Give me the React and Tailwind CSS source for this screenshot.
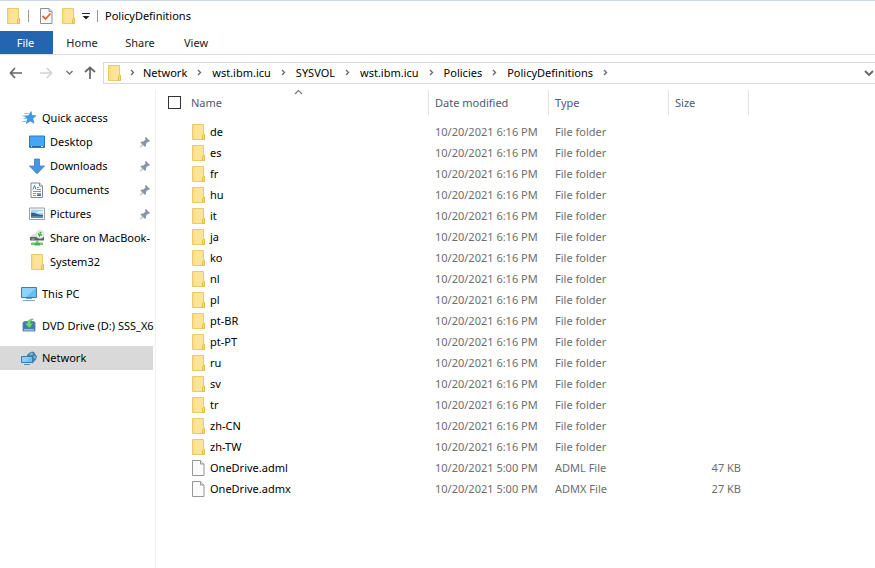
import React, { useState } from "react";

const folders = [
  "de", "es", "fr", "hu", "it", "ja", "ko", "nl", "pl",
  "pt-BR", "pt-PT", "ru", "sv", "tr", "zh-CN", "zh-TW",
];

const rows = [
  ...folders.map((name) => ({
    name,
    date: "10/20/2021 6:16 PM",
    type: "File folder",
    size: "",
  })),
  { name: "OneDrive.adml", date: "10/20/2021 5:00 PM", type: "ADML File", size: "47 KB" },
  { name: "OneDrive.admx", date: "10/20/2021 5:00 PM", type: "ADMX File", size: "27 KB" },
];

const crumbs = ["Network", "wst.ibm.icu", "SYSVOL", "wst.ibm.icu", "Policies", "PolicyDefinitions"];

function FolderIcon() {
  return (
    <svg width="13" height="16" viewBox="0 0 13 16" className="shrink-0" aria-hidden="true">
      <path d="M.5.5h11v9.500h1v5.500H.5z" fill="#fbe398" stroke="#ebca6c" />
      <path d="M1 1h2v14H1z" fill="#fbdd85" />
      <path d="M10.500 15.500v-4l1-1h1v5z" fill="#f8dc82" stroke="#e3bb52" />
    </svg>
  );
}

function FileIcon() {
  return (
    <svg width="13" height="16" viewBox="0 0 13 16" className="shrink-0" aria-hidden="true">
      <path d="M.5.5h8L12 4v11.500H.5z" fill="#fbfbfb" stroke="#969696" />
      <path d="M8.500.5V4H12" fill="#e8e8e8" stroke="#969696" />
    </svg>
  );
}

function PropertiesIcon() {
  return (
    <svg width="13" height="16" viewBox="0 0 13 16" aria-hidden="true">
      <path d="M.5.5h8.500l3 3v12H.5z" fill="#f7f8fa" stroke="#8c8f94" />
      <path d="M9 .5v3h3" fill="#dfe3e8" stroke="#8c8f94" />
      <path d="M2.500 8l3 3 5-5.500" fill="none" stroke="#e2652f" strokeWidth="1.800" />
    </svg>
  );
}

function StarIcon() {
  return (
    <svg width="16" height="16" viewBox="0 0 16 16" aria-hidden="true">
      <path d="M10 1.500l1 4 4 .2-3.200 2.700 1.200 4.800-3.700-2.300-4 2.600 1.200-4.600-3-2.800 4.100-.4z" fill="#3f97e4" stroke="#3586d2" strokeWidth=".6" />
      <path d="M3.500 3.500h4M1.500 6h3M2.500 8.500h3M1.500 11.500h4" stroke="#7fbdf0" />
    </svg>
  );
}

function DesktopIcon() {
  return (
    <svg width="16" height="14" viewBox="0 0 16 14" aria-hidden="true">
      <path d="M.5 1h15v11.500H.5z" fill="#47a6f4" stroke="#267ac4" />
      <path d="M1 11.500h14" stroke="#1e66ab" />
      <path d="M2 11.500h1M12 11.500h2" stroke="#c4e3ff" />
    </svg>
  );
}

function DownloadIcon() {
  return (
    <svg width="16" height="17" viewBox="0 0 16 17" aria-hidden="true">
      <path d="M5.500 1h5v7h5L8 15.800.5 8h5z" fill="#4694e2" stroke="#3880cc" strokeWidth=".8" />
    </svg>
  );
}

function DocumentIcon() {
  return (
    <svg width="14" height="17" viewBox="0 0 14 17" aria-hidden="true">
      <path d="M1 1h8.500l3 3v11.500H1z" fill="#fff" stroke="#82878c" />
      <path d="M9.500 1v3h3" fill="#e3e6e9" stroke="#82878c" />
      <path d="M7 5.500h2M7 7.500h4M3 9.500h8M3 11.500h3M3 13.500h3" stroke="#5b9fda" />
      <path d="M3 7.500l1.500-4L6 7.500" fill="none" stroke="#2d80c8" />
      <path d="M7 11h4v3H7z" fill="#5ea3d6" />
      <path d="M7 13h4v1H7z" fill="#3c6f60" />
    </svg>
  );
}

function PictureIcon() {
  return (
    <svg width="16" height="14" viewBox="0 0 16 14" aria-hidden="true">
      <path d="M.5 1h15v11.500H.5z" fill="#fff" stroke="#989da1" />
      <path d="M2 2.500h12V11H2z" fill="#a9d5f5" />
      <path d="M2 6c3-1 5 1.500 12 2v3H2z" fill="#376180" />
      <path d="M2 9.500c4-1 8 0 12-.5v2H2z" fill="#548cba" />
      <path d="M8 5c2-1.500 3-.5 6-1v2H8z" fill="#e8f4fc" />
    </svg>
  );
}

function ShareDriveIcon() {
  return (
    <svg width="16" height="17" viewBox="0 0 16 17" aria-hidden="true">
      <path d="M1 7l2.500-2.500h9L15 7v1H1z" fill="#d5d8da" />
      <path d="M1 7h14v3.500H1z" fill="#5c6063" />
      <path d="M2.500 9h3" stroke="#8fe080" />
      <circle cx="11" cy="4.500" r="4" fill="#f0f5ef" stroke="#c0c7c0" strokeWidth=".6" />
      <path d="M9 3l1.500 3 .8-2 1.700 1.500M10.500 2.300l2 .2" fill="none" stroke="#36a541" strokeWidth="1.200" />
      <path d="M7 10.500h2.500v2H14v2.500H2v-2.500h5z" fill="#74c777" />
      <path d="M5.500 13h5.500v2.500H5.500z" fill="#4bae57" />
    </svg>
  );
}

function ComputerIcon() {
  return (
    <svg width="16" height="16" viewBox="0 0 16 16" aria-hidden="true">
      <path d="M.5 1.500h15v10H.5z" fill="#65bdf4" stroke="#4b7999" />
      <path d="M1 2h14L5 11H1z" fill="#8ed2fb" />
      <path d="M5 12.500h6" stroke="#8b9aa6" />
      <path d="M2 14.500h12" stroke="#7ba9c8" />
    </svg>
  );
}

function DvdIcon() {
  return (
    <svg width="16" height="16" viewBox="0 0 16 16" aria-hidden="true">
      <path d="M2 4.500L3.500 3.500h9.500l1 1V13H2z" fill="#4678b0" stroke="#557da8" strokeWidth=".8" />
      <path d="M3 11h10v1.500H3z" fill="#9dbfe3" />
      <path d="M12.500 1C8 1 6.500 3 6.300 5.500H4L8.300 10 12 5.500H9.500c0-2 1-3.500 3-4.500z" fill="#6ddc70" stroke="#3caa4e" strokeWidth=".5" />
    </svg>
  );
}

function NetworkIcon() {
  return (
    <svg width="17" height="16" viewBox="0 0 17 16" aria-hidden="true">
      <path d="M6 5l2-2 3-1.500 2 .5 3 4.500-1 3-3.500 4L6 9z" fill="#4581ab" />
      <path d="M8 4l3-1.500 1.500 2-3 1zM13 5.500l2 1-1 2.500-1.500-1z" fill="#7fb2d4" />
      <path d="M.5 6.500h11v6H.5z" fill="#6cc0f3" stroke="#3c7baa" />
      <path d="M1 7h8l-4 5H1z" fill="#86cff9" />
      <path d="M3 14.500h6" stroke="#5a8caf" />
    </svg>
  );
}

function PinIcon() {
  return (
    <svg width="10" height="11" viewBox="0 0 10 11" className="shrink-0" role="img" aria-label="Pinned">
      <path d="M6 0l4 4-1 1-1-.2-2 2V9L5 10 3 8 .5 10.500 0 10l2.500-2.500L.5 5.500l1-1h2l2-2L5 1z" fill="#8797a5" />
    </svg>
  );
}

function Chevron({ direction = "right" }) {
  return (
    <svg width="9" height="9" viewBox="0 0 9 9" className="shrink-0" aria-hidden="true">
      {direction === "right" && <path d="M3 2l2.500 2.500L3 7" fill="none" stroke="#666" strokeWidth="1.300" />}
      {direction === "down" && <path d="M1.500 3l3 3 3-3" fill="none" stroke="#777" strokeWidth="1.500" />}
      {direction === "up" && <path d="M1 6l3.500-3.500L8 6" fill="none" stroke="#777" strokeWidth="1.100" />}
    </svg>
  );
}

function Arrow({ className }) {
  return (
    <svg width="14" height="12" viewBox="0 0 14 12" className={className} aria-hidden="true">
      <path d="M6 1L1.500 6 6 11M2 6h11" fill="none" stroke="currentColor" strokeWidth="1.700" />
    </svg>
  );
}

const quickAccess = [
  { label: "Desktop", icon: <DesktopIcon />, pinned: true },
  { label: "Downloads", icon: <DownloadIcon />, pinned: true },
  { label: "Documents", icon: <DocumentIcon />, pinned: true },
  { label: "Pictures", icon: <PictureIcon />, pinned: true },
  { label: "Share on MacBook-", icon: <ShareDriveIcon /> },
  { label: "System32", icon: <FolderIcon /> },
];

function NavItem({ item, nested, active }) {
  return (
    <a
      href="#"
      className={`flex h-6 items-center whitespace-nowrap ${nested ? "pl-7" : "pl-5"} ${
        active ? "bg-[#d9d9d9]" : ""
      }`}
    >
      <span className="flex w-[18px] shrink-0 justify-center">{item.icon}</span>
      <span className="ml-1 flex-1">{item.label}</span>
      {item.pinned && (
        <span className="mr-[3px]">
          <PinIcon />
        </span>
      )}
    </a>
  );
}

export default function App() {
  const [allSelected, setAllSelected] = useState(false);

  return (
    <div className="flex min-h-screen flex-col bg-white font-['Noto_Sans','Open_Sans',sans-serif] text-[11px] leading-4 text-black">
      {/* Title bar */}
      <header className="flex h-[31px] items-center border-t border-[#cbd5e4] pl-[7px]">
        <FolderIcon />
        <span className="mx-2 h-3 w-px bg-[#999]" />
        <button type="button" aria-label="Properties" className="ml-[3px]">
          <PropertiesIcon />
        </button>
        <button type="button" aria-label="New folder" className="ml-[9px]">
          <FolderIcon />
        </button>
        <button type="button" aria-label="Customize toolbar" className="ml-[7px]">
          <svg width="8" height="8" viewBox="0 0 8 8" aria-hidden="true">
            <path d="M0 1.500h8" stroke="#222" />
            <path d="M.5 4h7L4 7.500z" fill="#222" />
          </svg>
        </button>
        <span className="mx-[7px] h-3 w-px bg-[#999]" />
        <h1>PolicyDefinitions</h1>
      </header>

      {/* Ribbon tabs */}
      <nav className="flex h-6 border-b border-[#dcdcdc] text-[#222]">
        <button type="button" className="w-[53px] bg-[#2464b0] pr-0.5 text-white">File</button>
        <button type="button" className="w-[58px]">Home</button>
        <button type="button" className="w-[58px]">Share</button>
        <button type="button" className="w-[54px]">View</button>
      </nav>

      {/* Address bar */}
      <div className="flex h-[35px] items-center">
        <div className="flex w-[103px] shrink-0 items-center pl-[9px] text-[#666]">
          <button type="button" aria-label="Back"><Arrow /></button>
          <button type="button" aria-label="Forward" className="ml-4">
            <Arrow className="rotate-180 text-[#d4d4d4]" />
          </button>
          <button type="button" aria-label="Recent locations" className="ml-3">
            <Chevron direction="down" />
          </button>
          <button type="button" aria-label="Up" className="ml-[9px]">
            <Arrow className="rotate-90" />
          </button>
        </div>
        <div className="flex h-[22px] min-w-0 flex-1 items-center border-y border-l border-[#d9d9d9] pl-1">
          <FolderIcon />
          <span className="flex w-[22px] justify-center"><Chevron /></span>
          {crumbs.map((crumb, i) => (
            <React.Fragment key={i}>
              <a href="#">{crumb}</a>
              <span className="flex w-[25px] justify-center"><Chevron /></span>
            </React.Fragment>
          ))}
          <button type="button" aria-label="Previous locations" className="ml-auto pr-px">
            <svg width="10" height="8" viewBox="0 0 10 8" aria-hidden="true">
              <path d="M1 2l4 4 4-4" fill="none" stroke="#666" strokeWidth="1.900" />
            </svg>
          </button>
        </div>
      </div>

      <div className="flex flex-1">
        {/* Navigation pane */}
        <aside className="w-[156px] shrink-0 border-r border-[#f0f0f0] pt-4 pr-0.5">
          <NavItem item={{ label: "Quick access", icon: <StarIcon /> }} />
          {quickAccess.map((item) => (
            <NavItem key={item.label} item={item} nested />
          ))}
          <div className="mt-2 flex flex-col gap-2">
            <NavItem item={{ label: "This PC", icon: <ComputerIcon /> }} />
            <NavItem item={{ label: "DVD Drive (D:) SSS_X6", icon: <DvdIcon /> }} />
            <NavItem item={{ label: "Network", icon: <NetworkIcon /> }} active />
          </div>
        </aside>

        {/* File list */}
        <main className="min-w-0 flex-1">
          <table className="w-[593px] table-fixed border-collapse text-left">
            <colgroup>
              <col className="w-[273px]" />
              <col className="w-[120px]" />
              <col className="w-[120px]" />
              <col className="w-[80px]" />
            </colgroup>
            <thead className="text-[#4c5a78]">
              <tr>
                <th className="p-0 pb-1.5 font-normal">
                  <div className="relative flex h-[25px] items-center border-r border-[#e2e2e2] pl-3">
                    <input
                      type="checkbox"
                      aria-label="Select all"
                      checked={allSelected}
                      onChange={(e) => setAllSelected(e.target.checked)}
                      className="size-[13px] appearance-none border border-[#333] bg-white checked:bg-[#2464b0]"
                    />
                    <span className="ml-[10px]">Name</span>
                    <span className="absolute -top-0.5 left-1/2 ml-0.5"><Chevron direction="up" /></span>
                  </div>
                </th>
                <th className="p-0 pb-1.5 font-normal">
                  <div className="flex h-[25px] items-center border-r border-[#e2e2e2] pl-1.5">Date modified</div>
                </th>
                <th className="p-0 pb-1.5 font-normal">
                  <div className="flex h-[25px] items-center border-r border-[#e2e2e2] pl-1.5">Type</div>
                </th>
                <th className="p-0 pb-1.5 font-normal">
                  <div className="flex h-[25px] items-center border-r border-[#e2e2e2] pl-1.5">Size</div>
                </th>
              </tr>
            </thead>
            <tbody className="text-[#6d6d6d]">
              {rows.map((row) => (
                <tr key={row.name} className="h-[21px] whitespace-nowrap">
                  <td className="p-0 pl-9 text-black">
                    <div className="flex items-center gap-[5px]">
                      {row.size ? <FileIcon /> : <FolderIcon />}
                      <span>{row.name}</span>
                    </div>
                  </td>
                  <td className="p-0 pl-1.5">{row.date}</td>
                  <td className="p-0 pl-1.5">{row.type}</td>
                  <td className="p-0 pr-2 text-right">{row.size}</td>
                </tr>
              ))}
            </tbody>
          </table>
        </main>
      </div>
    </div>
  );
}
